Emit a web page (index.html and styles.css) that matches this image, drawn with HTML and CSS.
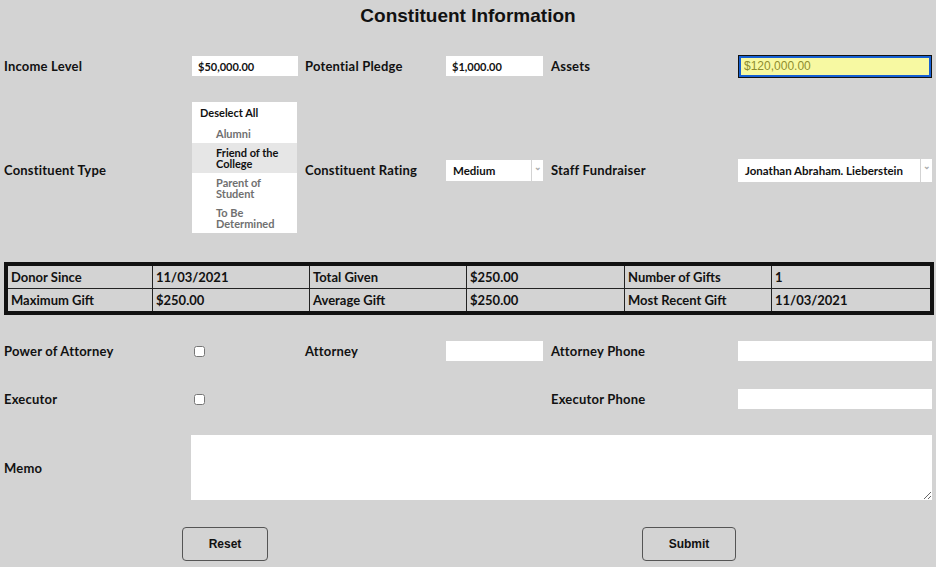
FILE: index.html
```html
<!DOCTYPE html>
<html lang="en">
<head>
    <meta charset="UTF-8">
    <meta name="viewport" content="width=device-width, initial-scale=1.0">
    <title>Constituent Information</title>
    <link rel="stylesheet" href="styles.css">
</head>
<body>
    <h1 class="page-title">Constituent Information</h1>

    <form class="constituent-form">
        <div class="form-row row-money">
            <label class="field-label">Income Level</label>
            <input class="text-input input-small" type="text" value="$50,000.00">
            <label class="field-label">Potential Pledge</label>
            <input class="text-input input-mini" type="text" value="$1,000.00">
            <label class="field-label">Assets</label>
            <input class="text-input input-wide input-focus" type="text" value="$120,000.00">
        </div>

        <div class="form-row row-type">
            <label class="field-label">Constituent Type</label>
            <div class="listbox">
                <div class="listbox-head">Deselect All</div>
                <div class="listbox-option">Alumni</div>
                <div class="listbox-option selected">Friend of the College</div>
                <div class="listbox-option">Parent of Student</div>
                <div class="listbox-option">To Be Determined</div>
            </div>
            <label class="field-label">Constituent Rating</label>
            <div class="select select-mini">
                <span class="select-value">Medium</span>
                <span class="select-arrow">&#8964;</span>
            </div>
            <label class="field-label">Staff Fundraiser</label>
            <div class="select select-wide">
                <span class="select-value">Jonathan Abraham. Lieberstein</span>
                <span class="select-arrow">&#8964;</span>
            </div>
        </div>

        <table class="summary-table">
            <tr>
                <th>Donor Since</th>
                <td>11/03/2021</td>
                <th>Total Given</th>
                <td>$250.00</td>
                <th>Number of Gifts</th>
                <td>1</td>
            </tr>
            <tr>
                <th>Maximum Gift</th>
                <td>$250.00</td>
                <th>Average Gift</th>
                <td>$250.00</td>
                <th>Most Recent Gift</th>
                <td>11/03/2021</td>
            </tr>
        </table>

        <div class="form-row row-check row-attorney">
            <label class="field-label">Power of Attorney</label>
            <input class="checkbox" type="checkbox">
            <label class="field-label">Attorney</label>
            <input class="text-input input-mini" type="text">
            <label class="field-label">Attorney Phone</label>
            <input class="text-input input-wide" type="text">
        </div>

        <div class="form-row row-check">
            <label class="field-label">Executor</label>
            <input class="checkbox" type="checkbox">
            <span></span>
            <span></span>
            <label class="field-label">Executor Phone</label>
            <input class="text-input input-wide" type="text">
        </div>

        <div class="form-row row-memo">
            <label class="field-label">Memo</label>
            <textarea class="memo"></textarea>
        </div>

        <div class="button-row">
            <button class="btn btn-reset" type="reset">Reset</button>
            <button class="btn btn-submit" type="button">Submit</button>
        </div>
    </form>
</body>
</html>
```

FILE: styles.css
```css
:root {
    --page-bg: #d3d3d3;
    --text-color: #111;
    --muted-text: #707070;
    --focus-blue: #1560d4;
}

body {
    margin: 0;
    padding: 0 4px;
    background: var(--page-bg);
    color: var(--text-color);
    font-family: 'Lato', 'Liberation Sans', sans-serif;
}

.page-title {
    margin: 0;
    height: 32px;
    line-height: 32px;
    text-align: center;
    font-family: 'Liberation Sans', Arial, sans-serif;
    font-size: 19px;
    font-weight: 700;
}

.form-row {
    display: grid;
    grid-template-columns: 188px 113px 141px 105px 187px 194px;
    align-items: center;
}

.row-money {
    height: 68px;
}

.row-type {
    height: 140px;
}

.row-check {
    height: 22px;
    margin-top: 26px;
}

.row-attorney {
    margin-top: 25px;
}

.row-memo {
    margin-top: 25px;
}

.field-label {
    font-size: 13px;
    font-weight: 700;
    letter-spacing: 0.2px;
}

.text-input {
    box-sizing: border-box;
    height: 20px;
    padding: 0 6px;
    border: none;
    background: white;
    font-family: inherit;
    font-size: 11px;
    font-weight: 700;
    color: var(--text-color);
}

.input-small { width: 106px; }
.input-mini { width: 97px; }
.input-wide { width: 194px; }

.input-focus {
    height: 23px;
    border: 1px solid #111;
    outline: 2px solid var(--focus-blue);
    outline-offset: -3px;
    background: #f7f9a2;
    color: #8f8d2e;
    font-family: 'Liberation Sans', Arial, sans-serif;
    font-size: 12px;
    font-weight: 400;
    padding-left: 5px;
}

.listbox {
    width: 105px;
    height: 131px;
    margin-top: -5px;
    background: white;
    font-size: 11px;
    font-weight: 700;
    line-height: 11px;
}

.listbox-head {
    padding: 5px 8px 6px;
}

.listbox-option {
    padding: 4px 12px 4px 24px;
    color: var(--muted-text);
}

.listbox-option.selected {
    background: #e6e6e6;
    color: var(--text-color);
}

.select {
    display: flex;
    background: white;
    font-size: 11.5px;
    font-weight: 700;
}

.select-mini {
    width: 97px;
    height: 21px;
    margin-top: 1px;
}

.select-wide {
    width: 194px;
    height: 23px;
}

.select-value {
    flex: 1;
    display: flex;
    align-items: center;
    padding-left: 7px;
    white-space: nowrap;
    overflow: hidden;
}

.select-arrow {
    width: 11px;
    border-left: 1px solid var(--page-bg);
    color: #aaa;
    font-size: 9px;
    text-align: center;
    line-height: 14px;
}

.summary-table {
    width: 930px;
    margin-top: 22px;
    border-collapse: collapse;
    border: 4px solid #111;
    font-size: 13px;
    font-weight: 700;
}

.summary-table th,
.summary-table td {
    height: 22px;
    padding: 0 3px;
    border: 1px solid #222;
    text-align: left;
    font-weight: 700;
}

.summary-table th:nth-child(1) { width: 138px; }
.summary-table td:nth-child(2) { width: 150px; }
.summary-table th:nth-child(3) { width: 150px; }
.summary-table td:nth-child(4) { width: 151px; }
.summary-table th:nth-child(5) { width: 140px; }

.checkbox {
    width: 11px;
    height: 11px;
    margin: 0 0 0 2px;
}

.memo {
    grid-column: 2 / -1;
    box-sizing: border-box;
    width: 741px;
    height: 65px;
    margin-left: -1px;
    border: none;
    background: white;
}

.button-row {
    display: flex;
    margin-top: 27px;
    padding-left: 178px;
}

.btn {
    box-sizing: border-box;
    height: 34px;
    border: 1px solid #555;
    border-radius: 4px;
    background: var(--page-bg);
    font-family: 'Liberation Sans Narrow', 'Liberation Sans', sans-serif;
    font-size: 12px;
    font-weight: 700;
    color: var(--text-color);
}

.btn-reset { width: 86px; }

.btn-submit {
    width: 94px;
    margin-left: 374px;
}
```
